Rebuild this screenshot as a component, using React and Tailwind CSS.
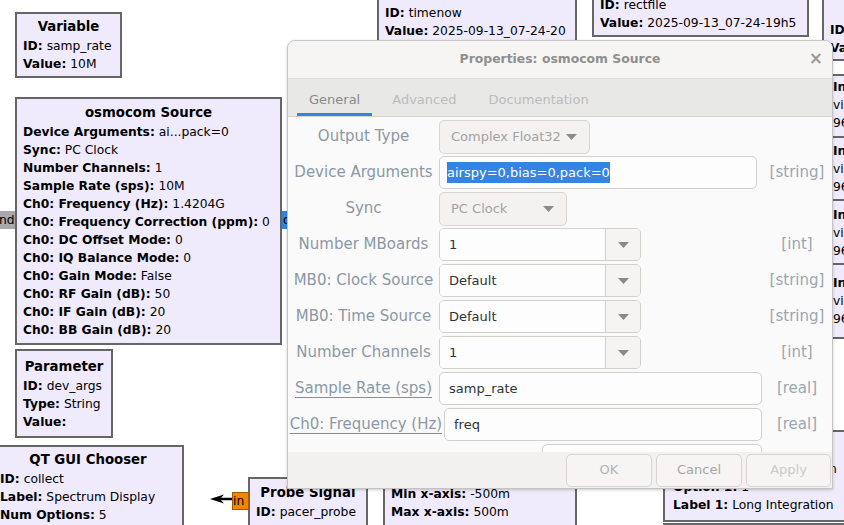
import React from 'react';

const blocks = [
  { pos: 'left-[15px] top-[12px] w-[107px] h-[66px] pt-[3px]', title: 'Variable', lines: [['ID:', 'samp_rate'], ['Value:', '10M']] },
  {
    pos: 'left-[15px] top-[97px] w-[267px] h-[248px] pt-[4px]',
    title: 'osmocom Source',
    lines: [
      ['Device Arguments:', 'ai...pack=0'],
      ['Sync:', 'PC Clock'],
      ['Number Channels:', '1'],
      ['Sample Rate (sps):', '10M'],
      ['Ch0: Frequency (Hz):', '1.4204G'],
      ['Ch0: Frequency Correction (ppm):', '0'],
      ['Ch0: DC Offset Mode:', '0'],
      ['Ch0: IQ Balance Mode:', '0'],
      ['Ch0: Gain Mode:', 'False'],
      ['Ch0: RF Gain (dB):', '50'],
      ['Ch0: IF Gain (dB):', '20'],
      ['Ch0: BB Gain (dB):', '20'],
    ],
  },
  { pos: 'left-[15px] top-[349px] w-[98px] h-[89px] pt-[6px]', title: 'Parameter', lines: [['ID:', 'dev_args'], ['Type:', 'String'], ['Value:', '']] },
  { pos: 'left-[-8px] top-[445px] w-[192px] h-[100px] pt-[3px]', title: 'QT GUI Chooser', lines: [['ID:', 'collect'], ['Label:', 'Spectrum Display'], ['Num Options:', '5']] },
  { pos: 'left-[248px] top-[477px] w-[120px] h-[60px] pt-[4px]', title: 'Probe Signal', lines: [['ID:', 'pacer_probe']] },
  { pos: 'left-[383px] top-[470px] w-[194px] h-[70px] pt-[13px]', lines: [['Min x-axis:', '-500m'], ['Max x-axis:', '500m']] },
  { pos: 'left-[663px] top-[430px] w-[200px] h-[92px] pt-[28px] pl-[8px]', lines: [['Label 0:', 'Short Integration'], ['Option 1:', '1'], ['Label 1:', 'Long Integration']] },
  { pos: 'left-[663px] top-[523px] w-[200px] h-[20px]', lines: [] },
  { pos: 'left-[377px] top-[-10px] w-[200px] h-[70px] pt-[12px]', lines: [['ID:', 'timenow'], ['Value:', '2025-09-13_07-24-20']] },
  { pos: 'left-[592px] top-[-20px] w-[217px] h-[57px] pt-[14px]', lines: [['ID:', 'rectfile'], ['Value:', '2025-09-13_07-24-19h5']] },
  { pos: 'left-[822px] top-[-10px] w-[60px] h-[71px] pt-[29px] pl-[6px]', lines: [['ID:', 'samp'], ['Value:', '1']] },
  { pos: 'left-[822px] top-[74px] w-[60px] h-[64px] pt-[2px] pl-[9px]', lines: [['In', ''], ['', 'virtual'], ['', '96000']] },
  { pos: 'left-[822px] top-[136px] w-[60px] h-[65px] pt-[4px] pl-[9px]', lines: [['In', ''], ['', 'virtual'], ['', '96000']] },
  { pos: 'left-[822px] top-[199px] w-[60px] h-[66px] pt-[5px] pl-[9px]', lines: [['In', ''], ['', 'virtual'], ['', '96000']] },
  { pos: 'left-[822px] top-[263px] w-[60px] h-[76px] pt-[9px] pl-[9px]', lines: [['In', ''], ['', 'virtual'], ['', '96000']] },
];

function Block({ pos, title, lines }) {
  return (
    <div className={`absolute ${pos} bg-[#efebfd] border-2 border-[#666666] px-[6px] text-[12.3px] leading-[18px] text-black whitespace-nowrap overflow-hidden`}>
      {title && <div className="font-bold text-center text-[13.3px] leading-[20px]">{title}</div>}
      {lines.map(([k, v], i) => (
        <div key={i}>
          <span className="font-bold">{k}</span> {v}
        </div>
      ))}
    </div>
  );
}

function Caret() {
  return (
    <svg width="11" height="6" viewBox="0 0 11 6" className="shrink-0">
      <path d="M0 0h11L5.5 6z" fill="#8a8a8a" />
    </svg>
  );
}

function Combo({ value, w }) {
  return (
    <div className={`${w} h-[34px] bg-[#f3f2f1] border border-[#d8d5d2] rounded-[5px] flex items-center justify-between pl-[11px] pr-[12px] text-[13px] text-[#a3a3a3] whitespace-nowrap`}>
      <span>{value}</span>
      <Caret />
    </div>
  );
}

function ComboEntry({ value }) {
  return (
    <div className="w-[202px] h-[33px] flex border border-[#d3d0cc] rounded-[5px] overflow-hidden text-[13px]">
      <div className="flex-1 bg-[#fdfdfd] flex items-center pl-[9px] text-[#2e3436]">{value}</div>
      <div className="w-[35px] bg-[#f5f4f3] border-l border-[#d3d0cc] flex items-center justify-center">
        <Caret />
      </div>
    </div>
  );
}

function Entry({ value, w }) {
  return (
    <div className={`${w} h-[33px] bg-[#fdfdfd] border border-[#d3d0cc] rounded-[5px] flex items-center pl-[9px] text-[13px] text-[#2e3436]`}>
      {value}
    </div>
  );
}

function Row({ label, type, children, labelW = 'w-[151px]', underline }) {
  return (
    <div className="flex items-center h-[33px] shrink-0 whitespace-nowrap">
      <div className={`${labelW} shrink-0 text-center text-[15px] text-[#8b98a4]`}>
        <span className={underline ? 'underline decoration-[#8c8c8c] underline-offset-[4px]' : ''}>{label}</span>
      </div>
      <div className="flex-1 flex">{children}</div>
      <div className="w-[70px] shrink-0 text-center text-[15px] text-[#9aa6b1]">{type}</div>
    </div>
  );
}

export default function App() {
  return (
    <div className="relative w-[844px] h-[525px] overflow-hidden bg-white font-['DejaVu_Sans',sans-serif]">
      {blocks.map((b, i) => (
        <Block key={i} {...b} />
      ))}

      {/* ports */}
      <div className="absolute left-0 top-[211px] w-[15px] h-[18px] bg-[#a9a9a9] text-[12.3px] leading-[18px] text-black overflow-hidden">
        <span className="ml-[-1px]">nd</span>
      </div>
      <div className="absolute left-[282px] top-[211px] w-[8px] h-[18px] bg-[#2f86e0] text-[12.3px] leading-[18px] text-black overflow-hidden pl-[1px]">
        d
      </div>
      <div className="absolute left-[232px] top-[492px] w-[17px] h-[18px] bg-[#f28500] border border-[#a85800] text-[12.3px] leading-[16px] text-black overflow-hidden">
        in
      </div>
      <svg className="absolute left-[209px] top-[493px]" width="24" height="12" viewBox="0 0 24 12">
        <path d="M1 6 L15 1.5 L11 6 L15 10.5 Z" fill="#000" />
        <path d="M11 6 H23" stroke="#000" strokeWidth="2.5" />
      </svg>

      {/* properties dialog */}
      <div className="absolute left-[287px] top-[40px] w-[546px] h-[449px] flex flex-col bg-[#fafafa] border border-[#c6c4c1] rounded-t-[8px] shadow-[0_1px_3px_rgba(0,0,0,0.2)] overflow-hidden">
        <div className="h-[38px] shrink-0 bg-[#f6f5f4] border-b border-[#dcdad7] flex items-center justify-center relative">
          <span className="text-[12.4px] font-bold text-[#8f8f8f]">Properties: osmocom Source</span>
          <span className="absolute right-[9px] top-[9px] text-[17px] leading-[17px] font-bold text-[#9a9a9a]">×</span>
        </div>
        <div className="h-[38px] shrink-0 bg-[#e8e8e7] border-b border-[#d6d4d1] flex pl-[9px] gap-[8px] text-[13px]">
          <div className="px-[12px] flex items-center border-b-[3px] border-[#3584e4] pt-[7px] text-[#8a8a8a]">General</div>
          <div className="px-[12px] flex items-center border-b-[3px] border-transparent pt-[7px] text-[#bcbcbc]">Advanced</div>
          <div className="px-[12px] flex items-center border-b-[3px] border-transparent pt-[7px] text-[#bcbcbc]">Documentation</div>
        </div>
        <div className="flex-1 overflow-hidden pt-[3px] flex flex-col gap-[3px]">
          <Row label="Output Type">
            <Combo value="Complex Float32" w="w-[151px]" />
          </Row>
          <Row label="Device Arguments" type="[string]">
            <div className="w-[318px] h-[33px] bg-[#fdfdfd] border border-[#d3d0cc] rounded-[5px] flex items-center pl-[7px] text-[13px]">
              <span className="bg-[#3584e4] text-white leading-[21px]">airspy=0,bias=0,pack=0</span>
            </div>
          </Row>
          <Row label="Sync">
            <Combo value="PC Clock" w="w-[128px]" />
          </Row>
          <Row label="Number MBoards" type="[int]">
            <ComboEntry value="1" />
          </Row>
          <Row label="MB0: Clock Source" type="[string]">
            <ComboEntry value="Default" />
          </Row>
          <Row label="MB0: Time Source" type="[string]">
            <ComboEntry value="Default" />
          </Row>
          <Row label="Number Channels" type="[int]">
            <ComboEntry value="1" />
          </Row>
          <Row label="Sample Rate (sps)" type="[real]" underline>
            <Entry value="samp_rate" w="w-[323px]" />
          </Row>
          <Row label="Ch0: Frequency (Hz)" type="[real]" labelW="w-[156px]" underline>
            <Entry value="freq" w="w-[318px]" />
          </Row>
          <Row label="" type="[real]" labelW="w-[254px]">
            <Entry value="0" w="w-[220px]" />
          </Row>
        </div>
        <div className="h-[36px] shrink-0 bg-[#f2f1f0] flex justify-end items-center gap-[4px] pr-[1px] text-[13px]">
          <div className="w-[86px] h-[33px] rounded-[5px] border border-[#d9d5d1] bg-[#f6f5f4] flex items-center justify-center text-[#b3b3b3]">OK</div>
          <div className="w-[86px] h-[33px] rounded-[5px] border border-[#d9d5d1] bg-[#f6f5f4] flex items-center justify-center text-[#a6a6a6]">Cancel</div>
          <div className="w-[85px] h-[33px] rounded-[5px] border border-[#d9d5d1] bg-[#f6f5f4] flex items-center justify-center text-[#cacaca]">Apply</div>
        </div>
      </div>
    </div>
  );
}
